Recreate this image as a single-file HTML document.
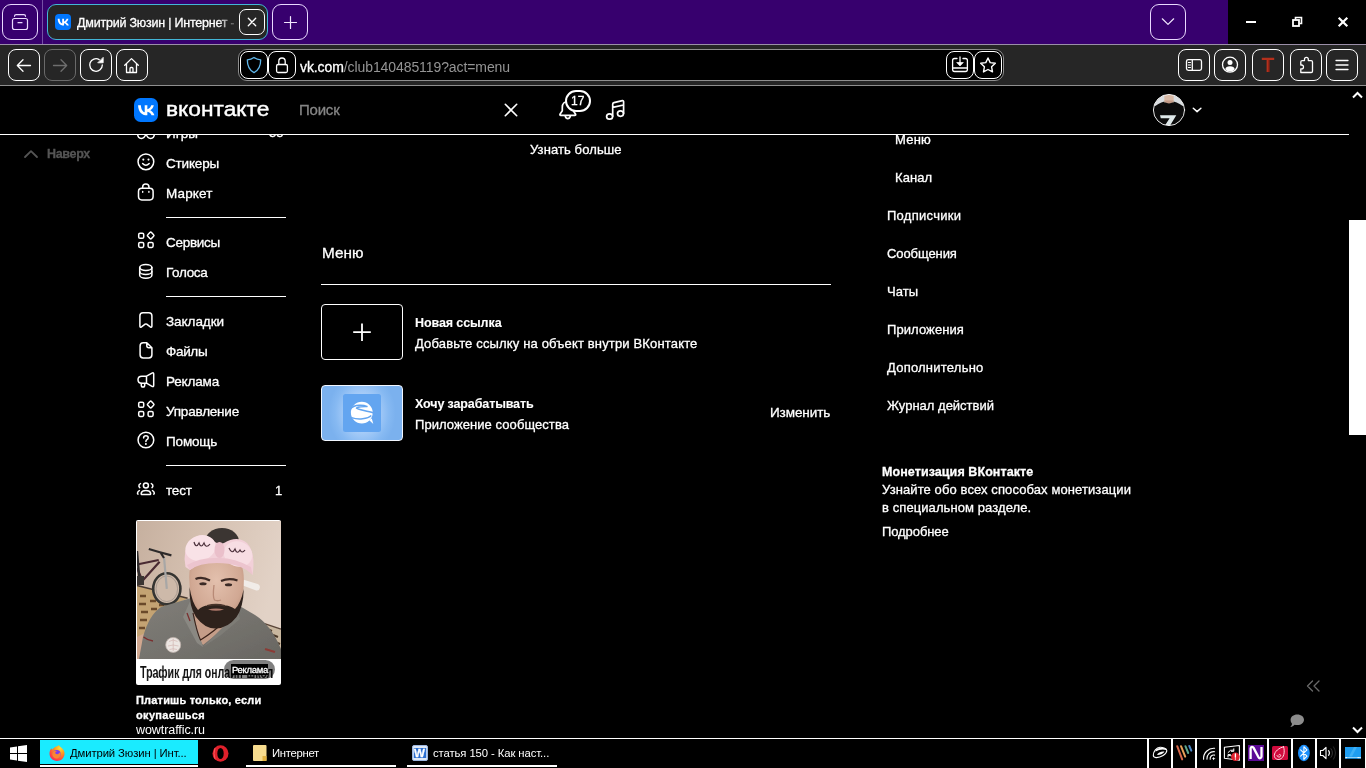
<!DOCTYPE html>
<html lang="ru">
<head>
<meta charset="utf-8">
<title>Дмитрий Зюзин | Интернет</title>
<style>
*{box-sizing:border-box;margin:0;padding:0}
html,body{width:1366px;height:768px;overflow:hidden;background:#000;color:#fff;font-family:"Liberation Sans",sans-serif}
.t,.nav,.tk{will-change:transform;-webkit-text-stroke:.3px}
.tk{-webkit-text-stroke:0}
.abs{position:absolute}
.t{position:absolute;white-space:nowrap;line-height:1}
svg{position:absolute;overflow:visible}
/* ---------- browser chrome ---------- */
#titlebar{position:absolute;left:0;top:0;width:1366px;height:44px;background:#37006e}
#tbline{position:absolute;left:0;top:44px;width:1366px;height:1px;background:#9b8fa8}
#toolbar{position:absolute;left:0;top:45px;width:1366px;height:40px;background:#262626}
#tlline{position:absolute;left:0;top:85px;width:1366px;height:1px;background:#8f8f8f}
.pbtn{position:absolute;top:4px;width:36px;height:36px;border:1px solid #e9d9ff;border-radius:9px}
.nbtn{position:absolute;top:49px;width:32px;height:32px;border:1px solid #fff;border-radius:8px}
#tab{position:absolute;left:47px;top:4px;width:221px;height:36px;background:#262626;border:1px solid #43b6d6;border-radius:9px}
#tabx{position:absolute;left:239px;top:9px;width:26px;height:26px;border:1px solid #fff;border-radius:7px}
#winctl{position:absolute;left:1228px;top:0;width:138px;height:44px;background:#000}
#urlbar{position:absolute;left:238px;top:49px;width:766px;height:32px;background:#000;border:1px solid #8f8f8f;border-radius:9px}
.ubtn{position:absolute;top:51px;width:28px;height:28px;border:1px solid #fff;border-radius:8px;background:#000}
/* ---------- page ---------- */
#hline{position:absolute;left:0;top:134px;width:1349px;height:1px;background:#fff}
.nav{position:absolute;left:166px;font-size:13.5px;white-space:nowrap;line-height:16px}
.sep{position:absolute;left:166px;width:120px;height:1px;background:#fff}
.rm{position:absolute;font-size:13px;white-space:nowrap;line-height:15px}
.c13{position:absolute;font-size:13px;white-space:nowrap;line-height:15px}
/* ---------- taskbar ---------- */
#taskline{position:absolute;left:0;top:738px;width:1366px;height:1px;background:#fff}
.tk{position:absolute;font-size:11.3px;white-space:nowrap;line-height:14px;top:746px}
.ul{position:absolute;top:765px;height:2px;background:#fff}
.cell{position:absolute;top:739px;width:22px;height:29px;background:#000}
</style>
</head>
<body>
<!-- ======= TITLE BAR ======= -->
<div id="titlebar"></div>
<div id="tbline"></div>
<div class="pbtn" style="left:2px"></div>
<div class="abs" style="left:42px;top:0;width:1px;height:44px;background:#7650a6"></div>
<div id="tab"></div>
<div id="tabx"></div>
<div class="pbtn" style="left:272px"></div>
<div class="pbtn" style="left:1150px"></div>
<div id="winctl"></div>
<!-- ======= TOOLBAR ======= -->
<div id="toolbar"></div>
<div id="tlline"></div>
<div class="nbtn" style="left:8px"></div>
<div class="nbtn" style="left:44px;border-color:#6a6a6a"></div>
<div class="nbtn" style="left:80px"></div>
<div class="nbtn" style="left:116px"></div>
<div id="urlbar"></div>
<div class="ubtn" style="left:240px"></div>
<div class="ubtn" style="left:268px"></div>
<div class="ubtn" style="left:946px"></div>
<div class="ubtn" style="left:974px"></div>
<div class="nbtn" style="left:1178px"></div>
<div class="nbtn" style="left:1214px"></div>
<div class="nbtn" style="left:1252px"></div>
<div class="nbtn" style="left:1290px"></div>
<div class="nbtn" style="left:1326px"></div>
<!-- chrome icons -->
<svg id="chromeicons" width="1366" height="90" viewBox="0 0 1366 90" style="left:0;top:0" fill="none" stroke="#fff" stroke-width="1.3" stroke-linecap="round" stroke-linejoin="round">
<!-- firefox view -->
<g stroke="#ecdcff" stroke-width="1.2">
<rect x="12.5" y="18.5" width="15" height="11" rx="2"/>
<path d="M14.5 16.3 Q14.5 14.6 16.2 14.6 H23.8 Q25.5 14.6 25.5 16.3"/>
<path d="M18 22.7 H22"/>
</g>
<!-- tab favicon -->
<rect x="55" y="14" width="16" height="16" rx="4" fill="#0077ff" stroke="none"/>
<path d="M63.7 25.6c-3.7 0-5.9-2.6-6-6.8h1.9c.1 3.1 1.5 4.4 2.600 4.700v-4.700h1.800v2.700c1.100-.1 2.200-1.300 2.600-2.700h1.800c-.3 1.700-1.500 2.900-2.400 3.400.9.400 2.300 1.500 2.800 3.400h-2c-.4-1.300-1.400-2.300-2.800-2.400v2.400z" fill="#fff" stroke="none"/>
<!-- tab close -->
<path d="M248.300 18.300 L255.700 25.700 M255.700 18.300 L248.300 25.700" stroke-width="1.3"/>
<!-- new tab -->
<path d="M284.500 22.500 H296.500 M290.500 16.500 V28.500" stroke="#f3e8ff" stroke-width="1.2"/>
<!-- tab list chevron -->
<path d="M1162.300 18.800 L1168 24.400 L1173.700 18.800" stroke="#f3e8ff" stroke-width="1.2"/>
<!-- window controls -->
<g stroke-linecap="butt" stroke-linejoin="miter">
<path d="M1246 22 H1256" stroke-width="2"/>
<path d="M1295.500 19.500 V17.500 H1301.500 V23.500 H1299.500" stroke-width="1.600"/>
<rect x="1293" y="20" width="6" height="6" stroke-width="1.800"/>
<path d="M1338.700 17.700 L1347.300 26.300 M1347.300 17.700 L1338.700 26.300" stroke-width="2.200"/>
</g>
<!-- back -->
<path d="M30.500 65.500 H17.500 M23 59.800 L17.300 65.500 L23 71.200"/>
<!-- forward -->
<path d="M53.500 65.500 H66.500 M61 59.800 L66.700 65.500 L61 71.200" stroke="#6e6e6e"/>
<!-- reload -->
<path d="M102.300 65 A6.300 6.300 0 1 1 99.200 59.600"/>
<path d="M103.200 57.700 V62.800 H98.100 Z" fill="#fff" stroke-width=".8"/>
<!-- home -->
<path d="M124.700 65.300 L131.500 58.600 L138.300 65.300 M126.500 64 V72.500 H136.500 V64 M130 72.500 V68.500 Q130 67.500 131 67.500 H132 Q133 67.500 133 68.500 V72.500"/>
<!-- shield -->
<path d="M254 57.500 C251.800 59 249.500 59.600 247.300 59.800 C247.300 66 249.300 70.300 254 72.600 C258.700 70.300 260.700 66 260.700 59.800 C258.500 59.600 256.200 59 254 57.500 Z" stroke="#5fb6ea" stroke-width="1.300"/>
<!-- lock -->
<rect x="276.600" y="64.500" width="10.800" height="8" rx="1.500"/>
<path d="M278.800 64.500 V61.200 A3.200 3.200 0 0 1 285.200 61.200 V64.500"/>
<!-- install -->
<path d="M957 58.500 H954.500 Q952.600 58.500 952.600 60.400 V69.600 Q952.600 71.500 954.500 71.500 H965.500 Q967.400 71.500 967.400 69.600 V60.400 Q967.400 58.500 965.500 58.500 H963 M952.600 68 H967.400 M960 57 V65"/>
<path d="M957 62.800 L960 65.800 L963 62.800 Z" fill="#fff" stroke-width=".8"/>
<!-- star -->
<path d="M988 58 L990.200 62.600 L995.300 63.300 L991.600 66.800 L992.500 71.900 L988 69.500 L983.500 71.900 L984.400 66.800 L980.700 63.300 L985.800 62.600 Z" stroke-width="1.400"/>
<!-- sidebar -->
<rect x="1186.500" y="59.600" width="15" height="10.800" rx="1.800"/>
<path d="M1192.300 59.600 V70.400"/>
<path d="M1188.300 62.500 H1190.500 M1188.300 65 H1190.500 M1188.300 67.500 H1190.500" stroke-width="1"/>
<!-- account -->
<circle cx="1230" cy="64.700" r="7.500"/>
<circle cx="1230" cy="62.400" r="2.500" fill="#fff" stroke="none"/>
<path d="M1225.200 69.200 Q1225.800 66.200 1230 66.200 Q1234.200 66.200 1234.800 69.200 Q1232.800 71.400 1230 71.400 Q1227.200 71.400 1225.200 69.200 Z" fill="#fff" stroke="none"/>
<!-- T extension -->
<path d="M1261.800 57.800 H1274.200 V59.900 H1269.400 V72 H1266.600 V59.900 H1261.800 Z" fill="#b5301c" stroke="none"/>
<path d="M1268.500 59.900 H1269.400 V72 H1268.500 Z" fill="#7a1a10" stroke="none"/>
<!-- puzzle -->
<path d="M1304.500 60.600 V59.300 A1.900 1.900 0 0 1 1308.300 59.300 V60.600 H1311.200 Q1312.500 60.600 1312.500 61.900 V71.200 Q1312.500 72.500 1311.200 72.500 H1300.800 V68.800 H1301.600 A1.900 1.900 0 0 0 1301.600 65 H1300.800 V61.900 Q1300.800 60.600 1302.100 60.600 Z"/>
<!-- menu -->
<path d="M1336 60.500 H1348 M1336 65 H1348 M1336 69.500 H1348" stroke-width="1.300"/>
</svg>
<div class="t" id="tabtitle" style="left:77px;top:17.2px;font-size:12.500px;color:#fff;letter-spacing:-0.215px;-webkit-mask-image:linear-gradient(to right,#000 90%,rgba(0,0,0,.25) 100%);mask-image:linear-gradient(to right,#000 90%,rgba(0,0,0,.25) 100%)">Дмитрий Зюзин | Интернет -</div>
<div class="t" id="urltext" style="left:299.500px;top:59.6px;font-size:14px;color:#fff;letter-spacing:-0.091px">vk.com<span style="color:#949494;-webkit-text-stroke:0">/club140485119?act=menu</span></div>
<!-- ======= PAGE ======= -->
<div id="hline"></div>
<!-- header -->
<svg width="1366" height="50" viewBox="0 86 1366 50" style="left:0;top:86px" fill="none" stroke="#fff" stroke-width="1.500" stroke-linecap="round" stroke-linejoin="round">
<rect x="134" y="98" width="24" height="24" rx="6.500" fill="#0077ff" stroke="none"/>
<path d="M147.050 115.300c-5.500 0-8.800-3.800-8.950-10.100h2.800c.1 4.600 2.200 6.600 3.800 7v-7h2.650v4c1.600-.2 3.300-2 3.850-4h2.600c-.4 2.500-2.200 4.300-3.500 5.050 1.300.6 3.350 2.200 4.150 5.050h-2.900c-.6-1.900-2.100-3.400-4.200-3.600v3.600z" fill="#fff" stroke="none"/>
<!-- search clear X -->
<path d="M505.300 104.300 L516.700 115.700 M516.700 104.300 L505.300 115.700" stroke-width="1.600"/>
<!-- bell -->
<path d="M567.800 101.500 C564.500 101.500 562.300 103.900 562.300 107.200 V110.800 L560 114.200 Q559.600 115.300 560.800 115.300 H574.800 Q576 115.300 575.600 114.200 L573.300 110.800 V107.200 C573.300 103.900 571.100 101.500 567.800 101.500 Z" stroke-width="1.700"/>
<path d="M565.300 116.200 Q565.900 118.600 567.800 118.600 Q569.700 118.600 570.300 116.200" stroke-width="1.700"/>
<rect x="566" y="91" width="24" height="20" rx="10" fill="#000" stroke="#fff" stroke-width="2"/>
<!-- music -->
<path d="M612.700 116.300 V104.200 Q612.700 102.900 614 102.600 L622.300 100.700 Q623.600 100.500 623.600 101.800 V113.300 M612.700 107.400 L623.600 105" stroke-width="1.700"/>
<ellipse cx="609.600" cy="116.500" rx="3" ry="2.700" stroke-width="1.700"/>
<ellipse cx="620.500" cy="113.600" rx="3" ry="2.700" stroke-width="1.700"/>
<!-- avatar -->
<circle cx="1169" cy="110" r="15.500" fill="#0a0a0a" stroke="none"/>
<clipPath id="avc"><circle cx="1169" cy="110" r="15.300"/></clipPath>
<g clip-path="url(#avc)" stroke="none">
<rect x="1153" y="94" width="32" height="12" fill="#d9dde0"/>
<path d="M1153 108 Q1158 103 1164.500 101.500 L1173.500 101.500 Q1180 103 1185 108 V127 H1153 Z" fill="#0b0b0b"/>
<rect x="1164.300" y="94" width="9.400" height="8.500" fill="#d8b9a5"/>
<path d="M1164.300 100.500 Q1169 106.500 1173.700 100.500 Z" fill="#c39a86"/>
<path d="M1160 115.200 H1176.300 L1169.500 126.500 H1164.300 L1169.600 118.200 H1160.800 Z" fill="#dfe9ea"/>
</g>
<circle cx="1169" cy="110" r="15.600" stroke="#fff" stroke-width=".9"/>
<path d="M1193.300 108.300 L1197.100 111.600 L1200.900 108.300" stroke-width="1.500"/>
</svg>
<div class="t" id="wordmark" style="left:165.7px;top:98.6px;font-size:20px;font-weight:400;-webkit-text-stroke:.4px;transform-origin:0 50%;transform:scaleX(1.137)">вконтакте</div>
<div class="t" id="poisk" style="left:299px;top:102px;font-size:15px;color:#868686;letter-spacing:-0.216px">Поиск</div>
<div class="t" id="b17" style="left:571px;top:95px;font-size:12px;color:#fff">17</div>
<!-- left nav -->
<div class="nav" id="n0" style="top:126.15px">Игры</div>
<div class="nav" id="n1" style="top:156.15px;letter-spacing:-0.181px">Стикеры</div>
<div class="nav" id="n2" style="top:186.15px;letter-spacing:0.130px">Маркет</div>
<div class="nav" id="n3" style="top:235.15px;letter-spacing:-0.277px">Сервисы</div>
<div class="nav" id="n4" style="top:265.15px;letter-spacing:-0.337px">Голоса</div>
<div class="nav" id="n5" style="top:314.15px;letter-spacing:-0.055px">Закладки</div>
<div class="nav" id="n6" style="top:344.15px;letter-spacing:-0.321px">Файлы</div>
<div class="nav" id="n7" style="top:374.15px;letter-spacing:-0.165px">Реклама</div>
<div class="nav" id="n8" style="top:404.15px;letter-spacing:-0.206px">Управление</div>
<div class="nav" id="n9" style="top:434.15px;letter-spacing:-0.159px">Помощь</div>
<div class="nav" id="n10" style="top:483.15px;letter-spacing:-0.171px">тест</div>
<div class="nav" id="ncnt" style="left:275.3px;top:483.40px;font-size:13px">1</div>
<div class="nav" id="ncnt0" style="left:269px;top:125.40px;font-size:13px">35</div>
<div class="sep" style="top:217px"></div>
<div class="sep" style="top:296px"></div>
<div class="sep" style="top:465px"></div>
<svg width="30" height="400" viewBox="130 118 30 400" style="left:130px;top:118px" fill="none" stroke="#fff" stroke-width="1.500" stroke-linecap="round" stroke-linejoin="round">
<g transform="translate(136 122)"><path d="M1.500 11.500 Q1.800 16.400 5.400 16.400 Q8.300 16.400 10 12 Q11.700 16.400 14.600 16.400 Q18.200 16.400 18.500 11.500"/></g>
<g transform="translate(136 152)"><circle cx="9.900" cy="9.800" r="7.850"/><circle cx="7.300" cy="7.600" r="1.050" fill="#fff" stroke="none"/><circle cx="12.500" cy="7.600" r="1.050" fill="#fff" stroke="none"/><path d="M6.600 11.600 Q9.900 15 13.200 11.600"/></g>
<g transform="translate(136 182)"><rect x="2.500" y="6.300" width="14.600" height="11.600" rx="3.300"/><path d="M6.600 6.300 V5.300 A3.200 3.200 0 0 1 13 5.300 V6.300"/><path d="M6.700 9.500 V10.300 M12.900 9.500 V10.300" stroke-width="1.400"/></g>
<g transform="translate(136 231)"><rect x="2.7" y="2.3" width="5" height="5" rx="1.3"/><rect x="2.7" y="11.400" width="5" height="5" rx="1.3"/><rect x="12.100" y="11.400" width="5" height="5" rx="1.3"/><path d="M13.900 1.500 Q14.700 .7 15.500 1.500 L17.600 3.700 Q18.400 4.500 17.600 5.300 L15.500 7.500 Q14.700 8.300 13.900 7.500 L11.800 5.300 Q11 4.500 11.800 3.700 Z"/></g>
<g transform="translate(136 261)"><ellipse cx="9.800" cy="6.500" rx="6.100" ry="3"/><path d="M3.700 6.500 V14.300 C3.700 16 6.500 17.300 9.800 17.300 C13.100 17.300 15.900 16 15.900 14.300 V6.500"/><path d="M3.700 10.400 C3.700 12.100 6.500 13.400 9.800 13.400 C13.100 13.400 15.900 12.100 15.900 10.400"/></g>
<g transform="translate(136 310)"><path d="M3.900 5.800 Q3.900 2.700 7 2.700 H12.800 Q15.900 2.700 15.900 5.800 V16.100 Q15.900 17.900 14.300 16.800 L10.700 14.200 Q9.900 13.600 9.100 14.200 L5.500 16.800 Q3.900 17.900 3.900 16.100 Z"/></g>
<g transform="translate(136 340)"><path d="M10.800 2.700 H7.300 Q4.100 2.700 4.100 5.900 V14.700 Q4.100 17.900 7.300 17.900 H12.700 Q15.900 17.900 15.900 14.700 V7.800 Z M10.800 2.700 V5.800 Q10.800 7.800 12.800 7.800 H15.900"/></g>
<g transform="translate(136 370)"><path d="M10.500 6.200 H5.800 Q2 6.200 2 9.700 Q2 13.200 5.800 13.200 H10.500 L16 16.300 Q17.700 17.200 17.700 15.300 V4.100 Q17.700 2.200 16 3.100 Z M10.500 6.200 V13.200"/><path d="M5.300 13.400 V15.200 Q5.300 17 7 17 Q8.700 17 8.700 15.200 V13.400"/></g>
<g transform="translate(136 400)"><rect x="2.7" y="2.3" width="5" height="5" rx="1.3"/><rect x="2.7" y="11.400" width="5" height="5" rx="1.3"/><rect x="12.100" y="11.400" width="5" height="5" rx="1.3"/><path d="M13.900 1.500 Q14.700 .7 15.500 1.500 L17.600 3.700 Q18.400 4.500 17.600 5.300 L15.500 7.500 Q14.700 8.300 13.900 7.500 L11.800 5.300 Q11 4.500 11.800 3.700 Z"/></g>
<g transform="translate(136 430)"><circle cx="9.900" cy="10" r="7.850"/><path d="M7.600 7.900 Q7.700 5.800 9.900 5.800 Q12.200 5.800 12.200 7.700 Q12.200 9 10.900 9.700 Q9.900 10.300 9.900 11.500"/><circle cx="9.900" cy="14" r="1" fill="#fff" stroke="none"/></g>
<g transform="translate(136 479)"><circle cx="9.900" cy="6.600" r="2.500"/><path d="M6.200 15.500 Q4.900 15.500 5.200 14.200 Q5.900 11.600 9.900 11.600 Q13.900 11.600 14.600 14.200 Q14.900 15.500 13.600 15.500 Z"/><path d="M4.500 4.600 Q2.700 5.300 2.900 7.100 Q3 8 3.800 8.600 M3.300 11.600 Q1.700 12.300 1.500 14 Q1.400 14.800 2 15.200"/><path d="M15.300 4.600 Q17.100 5.300 16.900 7.100 Q16.800 8 16 8.600 M16.500 11.600 Q18.100 12.300 18.300 14 Q18.400 14.800 17.800 15.200"/></g>
</svg>
<div class="abs" style="left:120px;top:122px;width:180px;height:12px;background:#000"></div>
<svg width="16" height="10" viewBox="0 0 16 10" style="left:23px;top:148.500px" fill="none" stroke="#555" stroke-width="1.800" stroke-linecap="round" stroke-linejoin="round"><path d="M2 8 L8 2.200 L14 8"/></svg>
<div class="t" id="naverh" style="left:47px;top:148.300px;font-size:12.500px;font-weight:700;color:#555;letter-spacing:-0.312px">Наверх</div>
<!-- main content -->
<div class="t" id="m_more" style="left:530.4px;top:142.20px;font-size:13px;line-height:15px;letter-spacing:0.095px">Узнать больше</div>
<div class="t" id="m_menu" style="left:321.5px;top:243.90px;font-size:15.3px;line-height:18px;letter-spacing:0.039px">Меню</div>
<div class="abs" style="left:321px;top:284px;width:510px;height:1px;background:#fff"></div>
<div class="abs" style="left:321px;top:304px;width:82px;height:56px;border:1px solid #fff;border-radius:4px"></div>
<svg width="20" height="20" viewBox="0 0 20 20" style="left:352px;top:322px" fill="none" stroke="#fff" stroke-width="1.800" stroke-linecap="butt"><path d="M1.200 10.200 H18.800 M10 1.400 V19"/></svg>
<div class="t" id="m_new" style="left:414.6px;top:315.67px;font-size:12.5px;line-height:15px;font-weight:700;-webkit-text-stroke:.1px;letter-spacing:-0.095px">Новая ссылка</div>
<div class="t" id="m_add" style="left:414.6px;top:335.60px;font-size:13px;line-height:15px;letter-spacing:0.155px">Добавьте ссылку на объект внутри ВКонтакте</div>
<div class="abs" style="left:321px;top:385px;width:82px;height:56px;border-radius:4px;border:1px solid #f2f7ff;background:radial-gradient(ellipse 42% 75% at 50% 50%,#c2dcfb 0%,#a9cdf8 45%,#86b9f2 80%,#7bb1ee 100%)"></div>
<div class="abs" style="left:343px;top:394px;width:38px;height:38px;border-radius:2.500px;background:#63a5f0"></div>
<svg width="38" height="38" viewBox="0 0 38 38" style="left:343px;top:394px" fill="none" stroke="none">
<circle cx="18.800" cy="18.600" r="10.900" fill="#fff"/>
<path d="M26 26 L30.300 30 L28.800 24.500 Z" fill="#fff"/>
<path d="M7.500 14.800 C12 10.200 20 10.800 24.500 12.600 C21 12.300 14 12.800 13.500 14.200 C14.500 15.800 24 16.600 30.200 18.800" stroke="#63a5f0" stroke-width="1.500"/>
<path d="M8.600 23.600 C15 26.200 25 25 28.300 21.600" stroke="#63a5f0" stroke-width="1.500"/>
</svg>
<div class="t" id="m_want" style="left:414.6px;top:396.57px;font-size:12.5px;line-height:15px;font-weight:700;-webkit-text-stroke:.1px;letter-spacing:-0.119px">Хочу зарабатывать</div>
<div class="t" id="m_app" style="left:414.6px;top:417.20px;font-size:13px;line-height:15px;letter-spacing:0.065px">Приложение сообщества</div>
<div class="t" id="m_edit" style="left:770.4px;top:404.72px;font-size:13.5px;line-height:16px;letter-spacing:-0.088px">Изменить</div>
<!-- right column -->
<div class="t" id="r0" style="left:895.3px;top:132.30px;font-size:13px;line-height:15px;letter-spacing:0.215px">Меню</div>
<div class="t" id="r1" style="left:895.3px;top:170.20px;font-size:13px;line-height:15px;letter-spacing:0.078px">Канал</div>
<div class="t" id="r2" style="left:887.4px;top:208.30px;font-size:13px;line-height:15px;letter-spacing:0.278px">Подписчики</div>
<div class="t" id="r3" style="left:887.4px;top:246.20px;font-size:13px;line-height:15px;letter-spacing:-0.085px">Сообщения</div>
<div class="t" id="r4" style="left:887.4px;top:284.20px;font-size:13px;line-height:15px;letter-spacing:0.095px">Чаты</div>
<div class="t" id="r5" style="left:887.4px;top:322.20px;font-size:13px;line-height:15px;letter-spacing:0.094px">Приложения</div>
<div class="t" id="r6" style="left:887.4px;top:360.20px;font-size:13px;line-height:15px;letter-spacing:0.225px">Дополнительно</div>
<div class="t" id="r7" style="left:887.4px;top:398.20px;font-size:13px;line-height:15px;letter-spacing:-0.001px">Журнал действий</div>
<div class="t" id="r_mon" style="left:882.4px;top:464.67px;font-size:12.5px;line-height:14px;font-weight:700;letter-spacing:0.082px">Монетизация ВКонтакте</div>
<div class="t" id="r_l1" style="left:882.4px;top:482.00px;font-size:13px;line-height:15px;letter-spacing:0.100px">Узнайте обо всех способах монетизации</div>
<div class="t" id="r_l2" style="left:882.4px;top:500.00px;font-size:13px;line-height:15px;letter-spacing:0.084px">в специальном разделе.</div>
<div class="t" id="r_more" style="left:882.4px;top:524.20px;font-size:13px;line-height:15px;letter-spacing:-0.091px">Подробнее</div>
<div class="abs" style="left:880px;top:122px;width:100px;height:12px;background:#000"></div>
<!-- scrollbar -->
<div class="abs" style="left:1349px;top:220px;width:17px;height:215px;background:#fff"></div>
<svg width="17" height="17" viewBox="0 0 17 17" style="left:1349px;top:86px" fill="none" stroke="#fff" stroke-width="2"><path d="M4 11.500 L8.500 7 L13 11.500"/></svg>
<svg width="17" height="17" viewBox="0 0 17 17" style="left:1349px;top:721px" fill="none" stroke="#fff" stroke-width="2"><path d="M4 6.500 L8.500 11 L13 6.500"/></svg>
<svg width="16" height="12" viewBox="0 0 16 12" style="left:1305px;top:680px" fill="none" stroke="#6a6a6a" stroke-width="1.300" stroke-linecap="round" stroke-linejoin="round"><path d="M7.500 1 L2.500 6 L7.500 11 M14 1 L9 6 L14 11"/></svg>
<svg width="16" height="14" viewBox="0 0 16 14" style="left:1289px;top:713.500px" fill="#8c8c8c" stroke="none"><path d="M8.300 .5 C12.200 .5 15 2.800 15 5.800 C15 8.800 12.200 11.100 8.300 11.100 C7.300 11.100 6.400 11 5.600 10.700 C4.600 11.800 3 12.800 1.300 13 C2.200 12.100 2.900 10.900 3 9.700 C2.100 8.700 1.600 7.300 1.600 5.800 C1.600 2.800 4.400 .5 8.300 .5 Z"/></svg>
<!-- ad block -->
<div class="abs" style="left:136px;top:520px;width:145px;height:165px;background:#fff;border-radius:2px"></div>
<svg width="144" height="138" viewBox="0 0 144 138" style="left:137px;top:521px;overflow:hidden">
<defs>
<linearGradient id="wall" x1="0" y1="0" x2="1" y2=".25"><stop offset="0" stop-color="#c6b09f"/><stop offset=".4" stop-color="#d3beae"/><stop offset="1" stop-color="#e2d2c6"/></linearGradient>
<linearGradient id="shirt" x1="0" y1="0" x2="1" y2="1"><stop offset="0" stop-color="#807e78"/><stop offset=".6" stop-color="#73716c"/><stop offset="1" stop-color="#686661"/></linearGradient>
<radialGradient id="skin" cx=".5" cy=".35" r=".65"><stop offset="0" stop-color="#e3c0ad"/><stop offset=".7" stop-color="#d1a893"/><stop offset="1" stop-color="#b88c77"/></radialGradient>
<clipPath id="adclip"><rect x="0" y="0" width="144" height="138"/></clipPath>
<filter id="soft" x="-5%" y="-5%" width="110%" height="110%"><feGaussianBlur stdDeviation=".45"/></filter>
</defs>
<g clip-path="url(#adclip)" filter="url(#soft)">
<rect width="144" height="138" fill="url(#wall)"/>
<!-- floor left -->
<path d="M0 65 L50.600 77.800 L40 82 L0 122 Z" fill="#c4a373"/>
<path d="M0 64.500 L50.600 77.300" stroke="#4a3a30" stroke-width="1.600"/>
<path d="M3 75 h6 M2 83 h7 M4 91 h7 M3 99 h7 M2 107 h6 M13 80 h6 M14 88 h6 M22 84 h5" stroke="#6a4a2c" stroke-width="2.400"/>
<!-- floor right / carpet -->
<path d="M112 97.700 L144 108.500 V138 H112 Z" fill="#c9b79f"/>
<path d="M112 97.400 L144 108.200" stroke="#5a4638" stroke-width="1.400"/>
<path d="M122 104 l5 2 M130 108 l5 2 M136 114 l5 2 M128 113 l5 2 M138 121 l5 2" stroke="#4d3b2b" stroke-width="2"/>
<!-- white pipe thing -->
<path d="M105.800 58.500 L119 62.500 Q123.500 63.500 122.800 67 Q122 70.500 118.500 69.300 L105.800 64.500 Z" fill="#f1ece8"/>
<!-- bike -->
<ellipse cx="29.800" cy="67.800" rx="13.600" ry="15.600" fill="#cdb9a9" stroke="#363533" stroke-width="2.600"/>
<ellipse cx="29.800" cy="67.800" rx="10.800" ry="12.800" fill="none" stroke="#9a8e86" stroke-width=".7"/>
<path d="M0 43.500 L21.700 39 M5.500 59.700 L22.600 40.700 M0 47 L5.500 59.700" stroke="#4a2a33" stroke-width="2.200" fill="none"/>
<path d="M27 36 L29.800 67.800" stroke="#a8a7a6" stroke-width="2.200" fill="none"/>
<path d="M11.800 28 L22 31 L34.400 34.400 M23.500 31.500 L27 37" stroke="#2e2c2c" stroke-width="2.200" fill="none"/>
<path d="M0 30 L2.500 60" stroke="#2e2c2c" stroke-width="2.400"/>
<rect x="0" y="55" width="7" height="9" fill="#3a3533"/>
<!-- left arm skin -->
<path d="M0 116 L8 112 L10 138 H0 Z" fill="#d0a78f"/>
<!-- shirt -->
<path d="M2 138 L6 116 Q12 94 24 86 L54 77 L101 84 L118 94 Q134 104 144 128 V138 Z" fill="url(#shirt)"/>
<path d="M6.500 116 Q10 119 16 120" stroke="#7a2f2f" stroke-width="1.300" fill="none"/>
<path d="M128 128 l10 3" stroke="#8a3a35" stroke-width="2"/>
<!-- neck + collar -->
<path d="M55 84 L62 118 L66 124 L86 108 L100 88 Z" fill="#c59d88"/>
<path d="M54 78 L46 96 L60 122 L66 126 L58 100 Z" fill="#8a8882"/>
<path d="M100 86 L103 98 L84 114 L66 126 L88 104 Z" fill="#7e7c76"/>
<path d="M56 92 Q60 112 63.500 119 Q78 110 90 98" stroke="#3a2118" stroke-width="1.100" fill="none"/>
<path d="M50 92 l3 8" stroke="#7a2f2f" stroke-width="1.300"/>
<!-- badge -->
<circle cx="36.200" cy="123.900" r="7.500" fill="#ece6e2"/>
<circle cx="36.200" cy="123.900" r="7.500" fill="none" stroke="#bdb0aa" stroke-width=".8"/>
<path d="M32 120.500 q4 -3 8.500 0 M31 125 q5 -2 10.500 0 M32.500 128.500 q3.500 -1.500 7.500 0 M36.200 117.500 v12.500" stroke="#d2b4b1" stroke-width=".7" fill="none"/>
<!-- head -->
<ellipse cx="85" cy="21" rx="17" ry="14" fill="#3b3431"/>
<path d="M52.500 62 Q50 38 66 34 L98 36 Q108 42 106.700 64 Q106 88 96 98 Q86 107 78 106.500 Q66 106 58 94 Q53 84 52.500 62 Z" fill="url(#skin)"/>
<!-- beard -->
<path d="M52.500 66 Q52 86 59 96 Q68 108 79 107.500 Q91 107 99.500 96 Q106.500 86 106.700 68 Q104 82 98 88 Q92 84 88 84.500 Q80 82.500 72 84.500 Q66 84 61 89 Q55 82 52.500 66 Z" fill="#2e211c"/>
<path d="M70 84 Q79 81.500 88 84 L88 85.500 Q79 83.500 70 85.500 Z" fill="#4a342c"/>
<path d="M71 88.500 Q79 86.500 87 88.500 Q79 91 71 88.500 Z" fill="#b17a6c"/>
<!-- brows, eyes, nose -->
<path d="M58.500 58 Q65 55 73 59.500" stroke="#3e2c25" stroke-width="2.200" fill="none"/>
<path d="M84 60 Q92 56.500 100.500 59.500" stroke="#3e2c25" stroke-width="2.200" fill="none"/>
<ellipse cx="66" cy="62.800" rx="3.600" ry="1.500" fill="#3a2a25"/>
<ellipse cx="91.500" cy="63.800" rx="3.600" ry="1.500" fill="#3a2a25"/>
<path d="M77 64 Q75.500 76 77.500 79 Q80.500 80.500 84 79" stroke="#b88a76" stroke-width="1.300" fill="none"/>
<!-- headband -->
<path d="M48.500 46 Q45 30 54 19 Q66 9 78 21 Q82 24 87 22 Q100 14 110 22 Q119 32 115.500 54 Q111 46 104 43 Q92 38 80 40 Q64 40 53 49 Z" fill="#f2d0d8"/>
<ellipse cx="63.500" cy="27" rx="15.500" ry="12.500" transform="rotate(-20 63.500 27)" fill="#f9e2e7"/>
<ellipse cx="101" cy="33" rx="14.500" ry="12.500" transform="rotate(20 101 33)" fill="#f7dde3"/>
<path d="M50 44 Q64 36 80 37 Q96 36 114 46 L115.500 54 Q104 42 80 42 Q62 42 53 49 Z" fill="#ecc4ce"/>
<ellipse cx="82.500" cy="29" rx="5" ry="8" fill="#eabfca"/>
<path d="M57 21 q2 7 5 1 q2 6 5 0 q2 6 6 1" stroke="#4a2f3a" stroke-width="1.200" fill="none"/>
<path d="M92 27 q3 7 6 1 q2 6 5 1 q2 4 5 0" stroke="#4a2f3a" stroke-width="1.200" fill="none"/>
</g>
</svg>
<div class="t" id="ad_cap" style="left:140px;top:663.56px;font-size:16px;line-height:18px;color:#111;font-weight:700;-webkit-text-stroke:0;transform-origin:0 50%;transform:scaleX(.659)">Трафик для онлайн-школ</div>
<div class="abs" style="left:224px;top:660px;width:51px;height:19px;border-radius:9.500px;background:rgba(0,0,0,.5)"></div>
<div class="abs" style="left:231px;top:663.500px;width:37px;height:11.500px;background:#000"></div>
<div class="t" id="ad_badge" style="left:231.500px;top:663.6px;font-size:9.500px;line-height:12px;color:#fff;letter-spacing:-0.301px">Реклама</div>
<div class="t" id="ad_t1" style="left:136px;top:693.69px;font-size:11px;line-height:13px;font-weight:700;letter-spacing:0.189px">Платишь только, если</div>
<div class="t" id="ad_t2" style="left:136px;top:708.69px;font-size:11px;line-height:13px;font-weight:700;letter-spacing:0.330px">окупаешься</div>
<div class="t" id="ad_t3" style="left:136px;top:723.27px;font-size:12.500px;line-height:14px;letter-spacing:-0.072px;-webkit-text-stroke:0">wowtraffic.ru</div>
<!-- ======= TASKBAR ======= -->
<div id="taskline"></div>
<div class="abs" style="left:0;top:739px;width:1366px;height:29px;background:#000"></div>
<svg width="17" height="17" viewBox="0 0 17 17" style="left:9.500px;top:744.500px" fill="#fff"><path d="M0 2.400 L7 1.400 V8 H0 Z M8 1.250 L17 0 V8 H8 Z M0 9 H7 V15.600 L0 14.600 Z M8 9 H17 V17 L8 15.750 Z"/></svg>
<div class="abs" style="left:40px;top:740px;width:158px;height:24px;background:#1aebff"></div>
<div class="ul" style="left:40px;width:158px"></div>
<svg width="16" height="16" viewBox="0 0 16 16" style="left:49px;top:745px">
<defs><radialGradient id="ffg" cx=".7" cy=".2" r="1"><stop offset="0" stop-color="#ffde3a"/><stop offset=".35" stop-color="#ff9a1f"/><stop offset=".7" stop-color="#ff4a3d"/><stop offset="1" stop-color="#e31587"/></radialGradient></defs>
<path d="M8.200 1.200 C9 .9 9.800 .2 10 0 C10.400 1.300 11.800 2.100 13.300 3.600 C15 5.300 15.800 7.300 15.500 9.500 C15 13.200 11.800 16 8 16 C3.800 16 .5 12.800 .5 8.600 C.5 6.300 1.300 4.500 2.600 3.200 C2.600 3.900 2.900 4.500 3.200 4.800 C4 3.300 5.800 1.800 8.200 1.200 Z" fill="url(#ffg)"/>
<circle cx="7.700" cy="9" r="3.900" fill="#7a3cf0"/>
<path d="M4.600 6.200 C5.800 5.400 7.400 5.600 8.200 6.300 C7 6.400 6.300 7 6.300 7.800 C6.300 8.700 7.200 9.300 8.300 9.200 C9.400 9.100 10.500 8.300 10.900 7.300 C12.200 9.300 11.400 12.300 8.800 13.200 C6 14.100 3.400 12.200 3.300 9.500 C3.300 8.300 3.700 7 4.600 6.200 Z" fill="#ff8a2a" opacity=".95"/>
</svg>
<div class="tk" id="tk1" style="left:70px;color:#000;letter-spacing:-0.104px">Дмитрий Зюзин | Инт...</div>
<svg width="17" height="17" viewBox="0 0 17 17" style="left:212px;top:744.500px"><ellipse cx="8.500" cy="8.500" rx="8" ry="8.200" fill="#e0202b"/><ellipse cx="8.500" cy="8.500" rx="3.200" ry="5.600" fill="#000"/><path d="M3 3 Q1 8.500 3 14" stroke="#ff6b6b" stroke-width=".8" fill="none"/></svg>
<svg width="14" height="16" viewBox="0 0 14 16" style="left:252.500px;top:745px"><path d="M0 1 Q0 0 1 0 H12.500 Q13.500 0 13.500 1 V15 Q13.500 16 12.500 16 H1 Q0 16 0 15 Z" fill="#f7dc8f"/><path d="M9.500 11 H13.500 V16 H9.500 Z" fill="#e3b341"/></svg>
<div class="tk" id="tk2" style="left:271.500px;letter-spacing:-0.287px">Интернет</div>
<div class="ul" style="left:246px;width:150px"></div>
<svg width="16" height="16" viewBox="0 0 16 16" style="left:412px;top:745px"><rect x=".5" y=".5" width="15" height="15" rx="1.500" fill="#dfe9f7" stroke="#9db7df"/><rect x="1.800" y="3" width="12.400" height="10" fill="#2b6fd1"/></svg>
<div class="t" id="tkw" style="left:414.200px;top:746.500px;font-size:11.500px;font-weight:700;color:#fff;line-height:12px">W</div>
<div class="tk" id="tk3" style="left:433px;letter-spacing:-0.091px">статья 150 - Как наст...</div>
<div class="ul" style="left:407px;width:150px"></div>
<div class="abs" style="left:1147px;top:739px;width:219px;height:29px;background:#fff"></div>
<div class="cell" style="left:1149px"></div>
<div class="cell" style="left:1173px"></div>
<div class="cell" style="left:1197px"></div>
<div class="cell" style="left:1221px"></div>
<div class="cell" style="left:1245px"></div>
<div class="cell" style="left:1269px"></div>
<div class="cell" style="left:1293px"></div>
<div class="cell" style="left:1317px"></div>
<div class="cell" style="left:1341px;width:24px"></div>
<svg width="220" height="30" viewBox="1146 738 220 30" style="left:1146px;top:738px" fill="none" stroke-linecap="round" stroke-linejoin="round">
<!-- yandex disk -->
<path d="M1153.300 755.300 C1153.300 751.500 1156.500 747.500 1160 747.300 C1162 747.200 1166.800 748.300 1166.800 750.600 C1166.800 754.300 1160.500 757.800 1156 757.600 C1154.300 757.500 1153.300 756.600 1153.300 755.300 Z" stroke="#fff" stroke-width="1.100"/>
<path d="M1157 755 C1158 752.600 1161.500 751.200 1164.500 751.700 C1162.500 754 1159.500 755.300 1157 755 Z" fill="#fff"/>
<path d="M1156 749.600 Q1160 746.600 1165.500 748.600 L1166.500 750 Q1161 748.300 1155.500 751.500 Z" fill="#fff"/>
<!-- stripes -->
<path d="M1177.200 746.200 L1182.200 759.400" stroke="#d7684a" stroke-width="2"/>
<path d="M1181 746.200 L1185.200 756.600" stroke="#e7a057" stroke-width="2"/>
<path d="M1185.400 746.200 L1188.200 753" stroke="#5ea88b" stroke-width="2"/>
<path d="M1189.300 746 L1191.300 750.600" stroke="#4a88c8" stroke-width="2"/>
<!-- wifi -->
<path d="M1203.600 759.300 A10.200 10.200 0 0 1 1214.600 748.300 M1206.900 759.300 A6.900 6.900 0 0 1 1214.600 751.700 M1210.200 759.300 A3.600 3.600 0 0 1 1214.600 755.100" stroke="#fff" stroke-width="1.100"/>
<path d="M1213.600 757 L1214.400 758.200 L1215.600 758.600 L1214.400 759.100 L1213.600 760.300 L1212.900 759.100 L1211.700 758.600 L1212.900 758.200 Z" fill="#fff"/>
<!-- display + alert -->
<path d="M1224.400 747.300 L1239.400 745.500 V760.200 L1224.400 758.300 Z" stroke="#fff" stroke-width="1.100"/>
<path d="M1228 752.500 Q1230 749.300 1233.500 750 M1233.800 748.800 V751.300 H1231.300 M1234 754.500 Q1231.500 757 1228.600 755.500 M1228 757 V754.600 H1230.400" stroke="#fff" stroke-width="1"/>
<circle cx="1235.400" cy="756.700" r="4.300" fill="#e0212d"/>
<path d="M1235.400 754 V757.200 M1235.400 758.900 V759.100" stroke="#fff" stroke-width="1.300"/>
<!-- purple N -->
<rect x="1248" y="745" width="16" height="16" fill="#5c0a96"/>
<path d="M1250.600 759 V748.600 C1250.600 746.600 1252.800 746.400 1253.600 747.900 L1258.500 757.300 C1259.300 758.800 1261.500 758.500 1261.500 756.600 V747" stroke="#fff" stroke-width="2.300" stroke-linecap="butt"/>
<!-- crimson -->
<rect x="1272" y="746" width="16" height="14" rx="1.500" fill="#d00b3d"/>
<path d="M1283.600 746.800 C1279 747.800 1274.500 751.500 1274.300 755.500 C1274.200 758.500 1277.500 760.200 1280 759.200 C1283.800 757.800 1285.200 752.500 1283.600 746.800 Z" stroke="#ffd7e0" stroke-width="1"/>
<path d="M1277 755.600 C1277.500 757.600 1280.500 757.600 1280.700 755.600 C1280.800 754.400 1279.300 754 1278.700 754.900" stroke="#ffd7e0" stroke-width="1"/>
<!-- bluetooth -->
<ellipse cx="1303.900" cy="753" rx="5.900" ry="8.200" fill="#1c8ffb"/>
<path d="M1300.600 749.800 L1307 756.200 L1303.900 759.300 V746.700 L1307 749.800 L1300.600 756.200" stroke="#fff" stroke-width="1.100"/>
<!-- speaker -->
<path d="M1320.500 750.500 H1322.800 L1326 747.300 V758.700 L1322.800 755.500 H1320.500 Z" stroke="#fff" stroke-width="1.100"/>
<path d="M1328.600 750.700 Q1330.300 753 1328.600 755.300" stroke="#fff" stroke-width="1.100"/>
<path d="M1331 748.700 Q1334 753 1331 757.300" stroke="#3a3a3a" stroke-width="1"/>
<path d="M1333.500 746.800 Q1337.500 753 1333.500 759.200" stroke="#2a2a2a" stroke-width="1"/>
<!-- blue display -->
<rect x="1345" y="747" width="16" height="11.800" fill="#1e9df1"/>
<path d="M1354 747 L1349 756.500 H1352 L1357 747 Z" fill="#3fb0f6"/>
<path d="M1345.600 757.500 H1360.400" stroke="#8fd2fb" stroke-width="1"/>
<rect x="1345.600" y="757" width="1.200" height="1.200" fill="#fff"/><rect x="1357.600" y="757" width="1.200" height="1.200" fill="#fff"/><rect x="1359.400" y="757" width="1.200" height="1.200" fill="#fff"/>
</svg>
</body>
</html>
